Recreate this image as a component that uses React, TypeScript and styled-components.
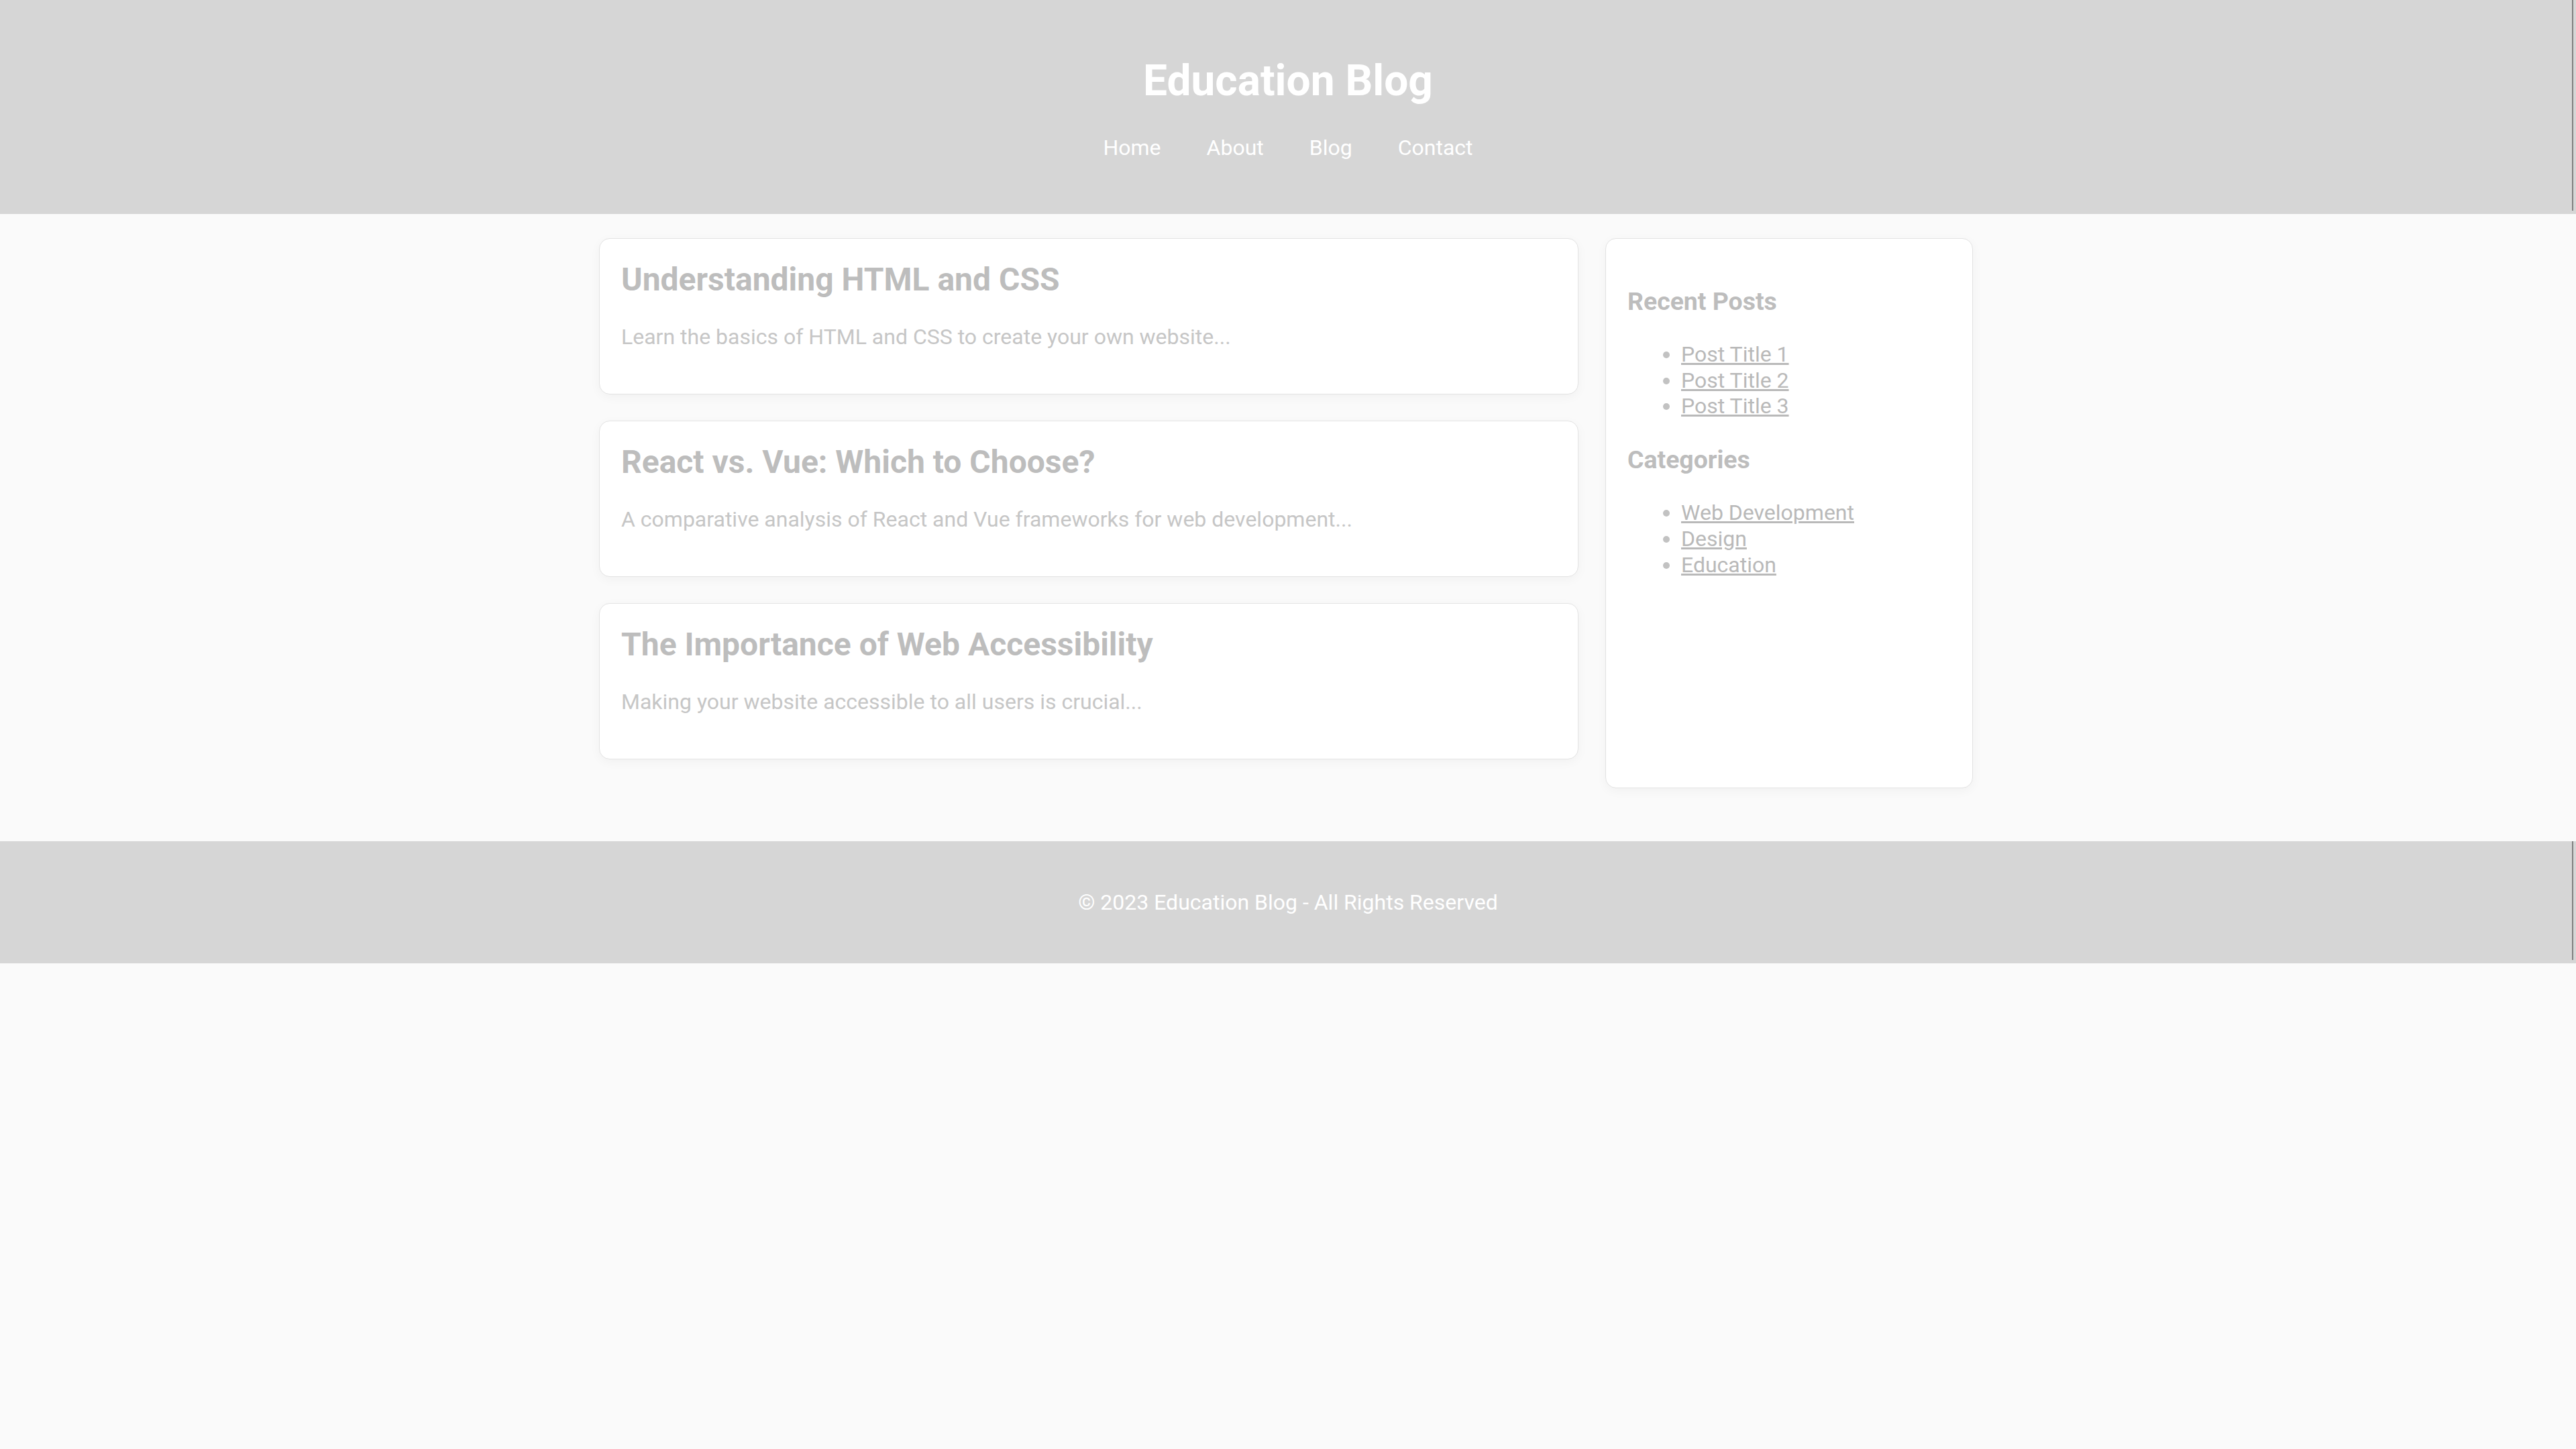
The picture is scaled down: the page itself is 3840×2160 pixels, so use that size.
import * as React from 'react';
import styled, { createGlobalStyle } from 'styled-components';

const GlobalStyle = createGlobalStyle`
  html, body {
    margin: 0;
    padding: 0;
    background: #fafafa;
    font-family: Roboto, "Liberation Sans", Arial, sans-serif;
    font-size: 32px;
  }
`;

const Bar = styled.div`
  position: relative;
  background: #d6d6d6;
  color: #ffffff;
  text-align: center;

  &::after {
    content: "";
    position: absolute;
    right: 4px;
    top: 0;
    bottom: 5px;
    width: 2px;
    background: #808080;
  }
`;

const Header = styled(Bar).attrs({ as: 'header' })`
  padding: 40px 40px 80px;
`;

const Footer = styled(Bar).attrs({ as: 'footer' })`
  padding: 40px;

  p {
    margin: 32px 0;
  }
`;

const Title = styled.h1`
  margin: 43px 0;
  font-size: 64px;
  font-weight: 700;
  line-height: normal;
`;

const Nav = styled.nav`
  display: flex;
  justify-content: center;
  gap: 68px;
`;

const NavLink = styled.a`
  color: #ffffff;
  text-decoration: none;
  font-size: 32px;
`;

const Container = styled.div`
  width: 2048px;
  margin: 36px 0 79px calc(50% - 1027px);
  display: flex;
  gap: 40px;
  align-items: stretch;
`;

const Posts = styled.main`
  width: 1460px;
  flex-shrink: 0;
  padding-bottom: 4px;
`;

const Card = styled.article`
  background: #ffffff;
  border: 1px solid #e3e3e3;
  border-radius: 16px;
  box-shadow: 0 4px 16px rgba(0, 0, 0, 0.04);
  padding: 32px 32px 34px;
  margin-bottom: 39px;

  h2 {
    margin: 0 0 38px;
    font-size: 48px;
    font-weight: 700;
    color: #bdbdbd;
  }

  p {
    margin: 0 0 32px;
    color: #c6c6c6;
  }
`;

const Sidebar = styled.aside`
  flex: 1;
  background: #ffffff;
  border: 1px solid #e3e3e3;
  border-radius: 16px;
  box-shadow: 0 4px 16px rgba(0, 0, 0, 0.04);
  padding: 34px 32px 32px;
`;

const SideHeading = styled.h3`
  margin: 37px 0;
  font-size: 37.4px;
  font-weight: 700;
  color: #bdbdbd;
`;

const LinkList = styled.ul`
  margin: 38px 0;
  padding-left: 80px;
  color: #c2c2c2;
  line-height: 1.21;

  a {
    color: #b9b9b9;
    text-decoration: underline;
  }
`;

const posts = [
  { title: 'Understanding HTML and CSS', text: 'Learn the basics of HTML and CSS to create your own website...' },
  { title: 'React vs. Vue: Which to Choose?', text: 'A comparative analysis of React and Vue frameworks for web development...' },
  { title: 'The Importance of Web Accessibility', text: 'Making your website accessible to all users is crucial...' },
];

export default function App() {
  return (
    <>
      <GlobalStyle />
      <Header>
        <Title>Education Blog</Title>
        <Nav>
          <NavLink href="#">Home</NavLink>
          <NavLink href="#">About</NavLink>
          <NavLink href="#">Blog</NavLink>
          <NavLink href="#">Contact</NavLink>
        </Nav>
      </Header>

      <Container>
        <Posts>
          {posts.map(p => (
            <Card key={p.title}>
              <h2>{p.title}</h2>
              <p>{p.text}</p>
            </Card>
          ))}
        </Posts>

        <Sidebar>
          <SideHeading>Recent Posts</SideHeading>
          <LinkList>
            <li><a href="#">Post Title 1</a></li>
            <li><a href="#">Post Title 2</a></li>
            <li><a href="#">Post Title 3</a></li>
          </LinkList>
          <SideHeading>Categories</SideHeading>
          <LinkList>
            <li><a href="#">Web Development</a></li>
            <li><a href="#">Design</a></li>
            <li><a href="#">Education</a></li>
          </LinkList>
        </Sidebar>
      </Container>

      <Footer>
        <p>© 2023 Education Blog - All Rights Reserved</p>
      </Footer>
    </>
  );
}
